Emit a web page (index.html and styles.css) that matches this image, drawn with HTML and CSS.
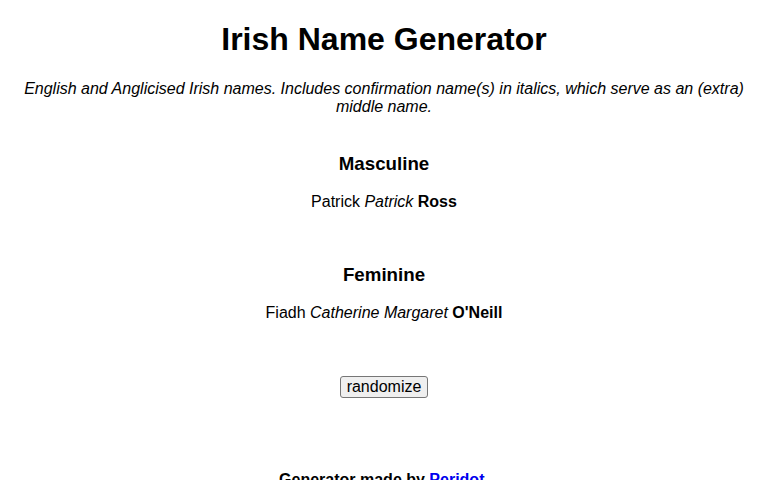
FILE: index.html
```html
<!DOCTYPE html>
<html>
<head>
<meta charset="utf-8">
<link rel="stylesheet" href="styles.css">
</head>
<body>
<h1 class="title">Irish Name Generator</h1>
<p class="intro">English and Anglicised Irish names. Includes confirmation name(s) in italics, which serve as an (extra) middle name.</p>
<section class="group group-first">
  <h3 class="group-title">Masculine</h3>
  <p class="name">Patrick <i>Patrick</i> <b>Ross</b></p>
</section>
<section class="group">
  <h3 class="group-title">Feminine</h3>
  <p class="name">Fiadh <i>Catherine Margaret</i> <b>O'Neill</b></p>
</section>
<div class="actions">
  <button class="btn" type="button">randomize</button>
</div>
<p class="footer">Generator made by <a class="link" href="#">Peridot</a>&nbsp;</p>
</body>
</html>
```
FILE: styles.css
```css
body {
  margin: 8px;
  font-family: "Liberation Sans", Arial, sans-serif;
  text-align: center;
  color: #000;
  background: #fff;
}
.title {
  font-size: 32px;
  font-weight: bold;
  margin: 13.44px 0 21.44px;
}
.intro {
  font-style: italic;
  font-size: 16px;
  margin: 16px 0;
}
.group {
  margin-top: 36.7px;
}
.group + .group {
  margin-top: 52.3px;
}
.group-title {
  font-size: 18.72px;
  margin: 0 0 18.72px;
}
.name {
  font-size: 16px;
  margin: 0;
}
.actions {
  margin-top: 54px;
}
.btn {
  font-family: "Liberation Sans", Arial, sans-serif;
  font-size: 16px;
  padding: 1px 6px;
  background: #efefef;
  border: 1px solid #767676;
  border-radius: 3px;
  color: #000;
  line-height: normal;
}
.footer {
  font-weight: bold;
  margin: 73px 0 0;
}
.link {
  color: #0000ee;
  text-decoration: underline;
}
```
